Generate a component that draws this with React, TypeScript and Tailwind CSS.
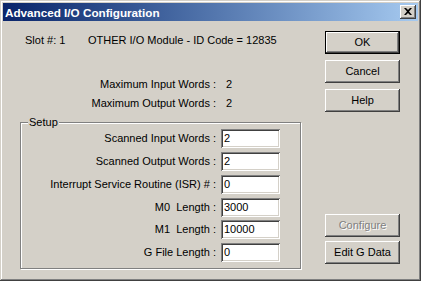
import React from "react";

const raised =
  "shadow-[inset_-1px_-1px_0_#404040,inset_1px_1px_0_#ffffff,inset_-2px_-2px_0_#808080,inset_2px_2px_0_#d4d0c8]";

function Btn({ label, def, disabled }: { label: string; def?: boolean; disabled?: boolean }) {
  if (def) {
    return (
      <div className="w-[75px] h-[23px] border border-black bg-[#d4d0c8] flex">
        <div className={`flex-1 flex items-center justify-center ${raised}`}>
          <span className="text-black">{label}</span>
        </div>
      </div>
    );
  }
  return (
    <div className={`w-[75px] h-[23px] bg-[#d4d0c8] flex items-center justify-center ${raised}`}>
      <span
        className={
          disabled ? "text-[#808080] [text-shadow:1px_1px_0_#ffffff]" : "text-black"
        }
      >
        {label}
      </span>
    </div>
  );
}

function Field({ label, value, mt }: { label: string; value: string; mt: string }) {
  return (
    <div className={`flex items-center ${mt}`}>
      <div className="w-[195px] text-right whitespace-pre">{label}</div>
      <div className="ml-[5px] w-[59px] h-[19px] bg-white flex items-center pl-[3px] shadow-[inset_1px_1px_0_#808080,inset_-1px_-1px_0_#ffffff,inset_2px_2px_0_#404040,inset_-2px_-2px_0_#d4d0c8]">
        {value}
      </div>
    </div>
  );
}

export default function App() {
  return (
    <div
      className="w-[421px] h-[281px] bg-[#d4d0c8] flex flex-col p-[3px] text-[11px] leading-[13px] text-black shadow-[inset_-1px_-1px_0_#404040,inset_1px_1px_0_#d4d0c8,inset_-2px_-2px_0_#808080,inset_2px_2px_0_#ffffff]"
      style={{ fontFamily: '"Liberation Sans", Arial, sans-serif' }}
    >
      <div className="h-[18px] flex items-center justify-between bg-gradient-to-r from-[#0a246a] to-[#a6caf0] pl-[2px] pr-[2px]">
        <span className="text-white font-bold text-[11.7px]">Advanced I/O Configuration</span>
        <div className={`w-[16px] h-[14px] bg-[#d4d0c8] flex items-center justify-center ${raised}`}>
          <svg width="8" height="7" viewBox="0 0 8 7" className="-mt-[1px]">
            <path d="M0 0h2l2 2 2-2h2L5 3.5 8 7H6L4 5 2 7H0l3-3.5z" fill="#000" />
          </svg>
        </div>
      </div>
      <div className="flex flex-1">
        <div className="w-[322px] flex flex-col">
          <div className="flex mt-[13px] pl-[22px]">
            <span className="w-[63px]">Slot #: 1</span>
            <span>OTHER I/O Module - ID Code = 12835</span>
          </div>
          <div className="flex mt-[31px]">
            <div className="w-[213px] text-right">Maximum Input Words :</div>
            <div className="pl-[10px]">2</div>
          </div>
          <div className="flex mt-[6px]">
            <div className="w-[213px] text-right">Maximum Output Words :</div>
            <div className="pl-[10px]">2</div>
          </div>
          <div className="relative ml-[17px] mt-[12px] w-[281px] h-[147px] border border-[#808080] shadow-[1px_1px_0_#ffffff,inset_1px_1px_0_#ffffff] pt-[6px] pr-[20px]">
            <span className="absolute left-[7px] -top-[7px] bg-[#d4d0c8] px-[1px]">Setup</span>
            <Field label="Scanned Input Words :" value="2" mt="mt-0" />
            <Field label="Scanned Output Words :" value="2" mt="mt-[4px]" />
            <Field label="Interrupt Service Routine (ISR) # :" value="0" mt="mt-[4px]" />
            <Field label="M0  Length :" value="3000" mt="mt-[4px]" />
            <Field label="M1  Length :" value="10000" mt="mt-[3px]" />
            <Field label="G File Length :" value="0" mt="mt-[4px]" />
          </div>
        </div>
        <div className="flex flex-col pt-[10px]">
          <Btn label="OK" def />
          <div className="mt-[6px]">
            <Btn label="Cancel" />
          </div>
          <div className="mt-[6px]">
            <Btn label="Help" />
          </div>
          <div className="mt-[102px]">
            <Btn label="Configure" disabled />
          </div>
          <div className="mt-[4px]">
            <Btn label="Edit G Data" />
          </div>
        </div>
      </div>
    </div>
  );
}
